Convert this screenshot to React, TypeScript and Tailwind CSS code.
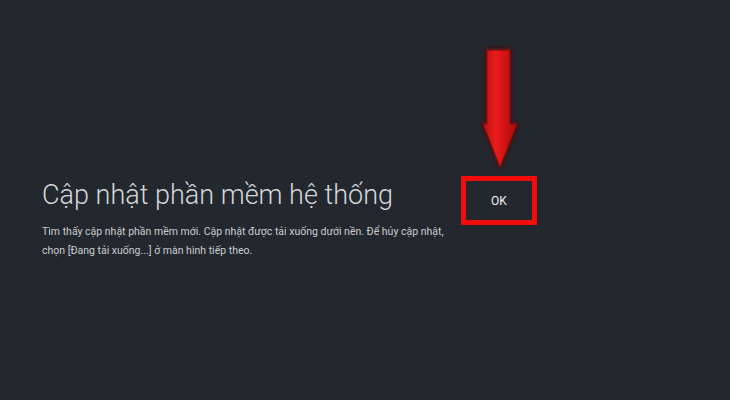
import React from "react";

export default function App() {
  return (
    <div className="relative h-[400px] w-full overflow-hidden bg-[#23282e] font-['Roboto',sans-serif]">
      <div className="flex items-start pt-[176px] pl-[42px]">
        <div className="w-[419px]">
          <h1 className="mt-[3px] whitespace-nowrap text-[27px] font-light leading-[32px] text-[#d3d6d9]">
            Cập nhật phần mềm hệ thống
          </h1>
          <p className="mt-[11px] whitespace-nowrap text-[10.5px] leading-[19px] text-[#c9ccd0]">
            Tìm thấy cập nhật phần mềm mới. Cập nhật được tải xuống dưới nền. Để hủy cập nhật,
            <br />
            chọn [Đang tải xuống...] ở màn hình tiếp theo.
          </p>
        </div>
        <div className="flex h-[49px] w-[76px] items-center justify-center border-[5px] border-[#f20d0d] text-[12px] font-normal text-[#eef0f2]">
          OK
        </div>
      </div>
      <svg
        className="absolute left-[474px] top-[44px]"
        width="52"
        height="130"
        viewBox="0 0 52 130"
      >
        <defs>
          <linearGradient id="ag" x1="0" y1="0" x2="1" y2="0">
            <stop offset="0" stopColor="#b30e0e" />
            <stop offset="0.35" stopColor="#e81c1c" />
            <stop offset="0.6" stopColor="#d41414" />
            <stop offset="1" stopColor="#a50c0c" />
          </linearGradient>
          <filter id="glow" x="-30%" y="-10%" width="160%" height="120%">
            <feGaussianBlur stdDeviation="2" />
          </filter>
        </defs>
        <path
          d="M12 4 L37 4 L37 78 L45 78 L26 126 L7 78 L12 78 Z"
          fill="#5a0a0a"
          filter="url(#glow)"
          opacity="0.9"
        />
        <path
          d="M13 6 L36 6 L36 80 L43 80 L26 123 L9 80 L13 80 Z"
          fill="url(#ag)"
          stroke="#8a0b0b"
          strokeWidth="1"
        />
      </svg>
    </div>
  );
}
